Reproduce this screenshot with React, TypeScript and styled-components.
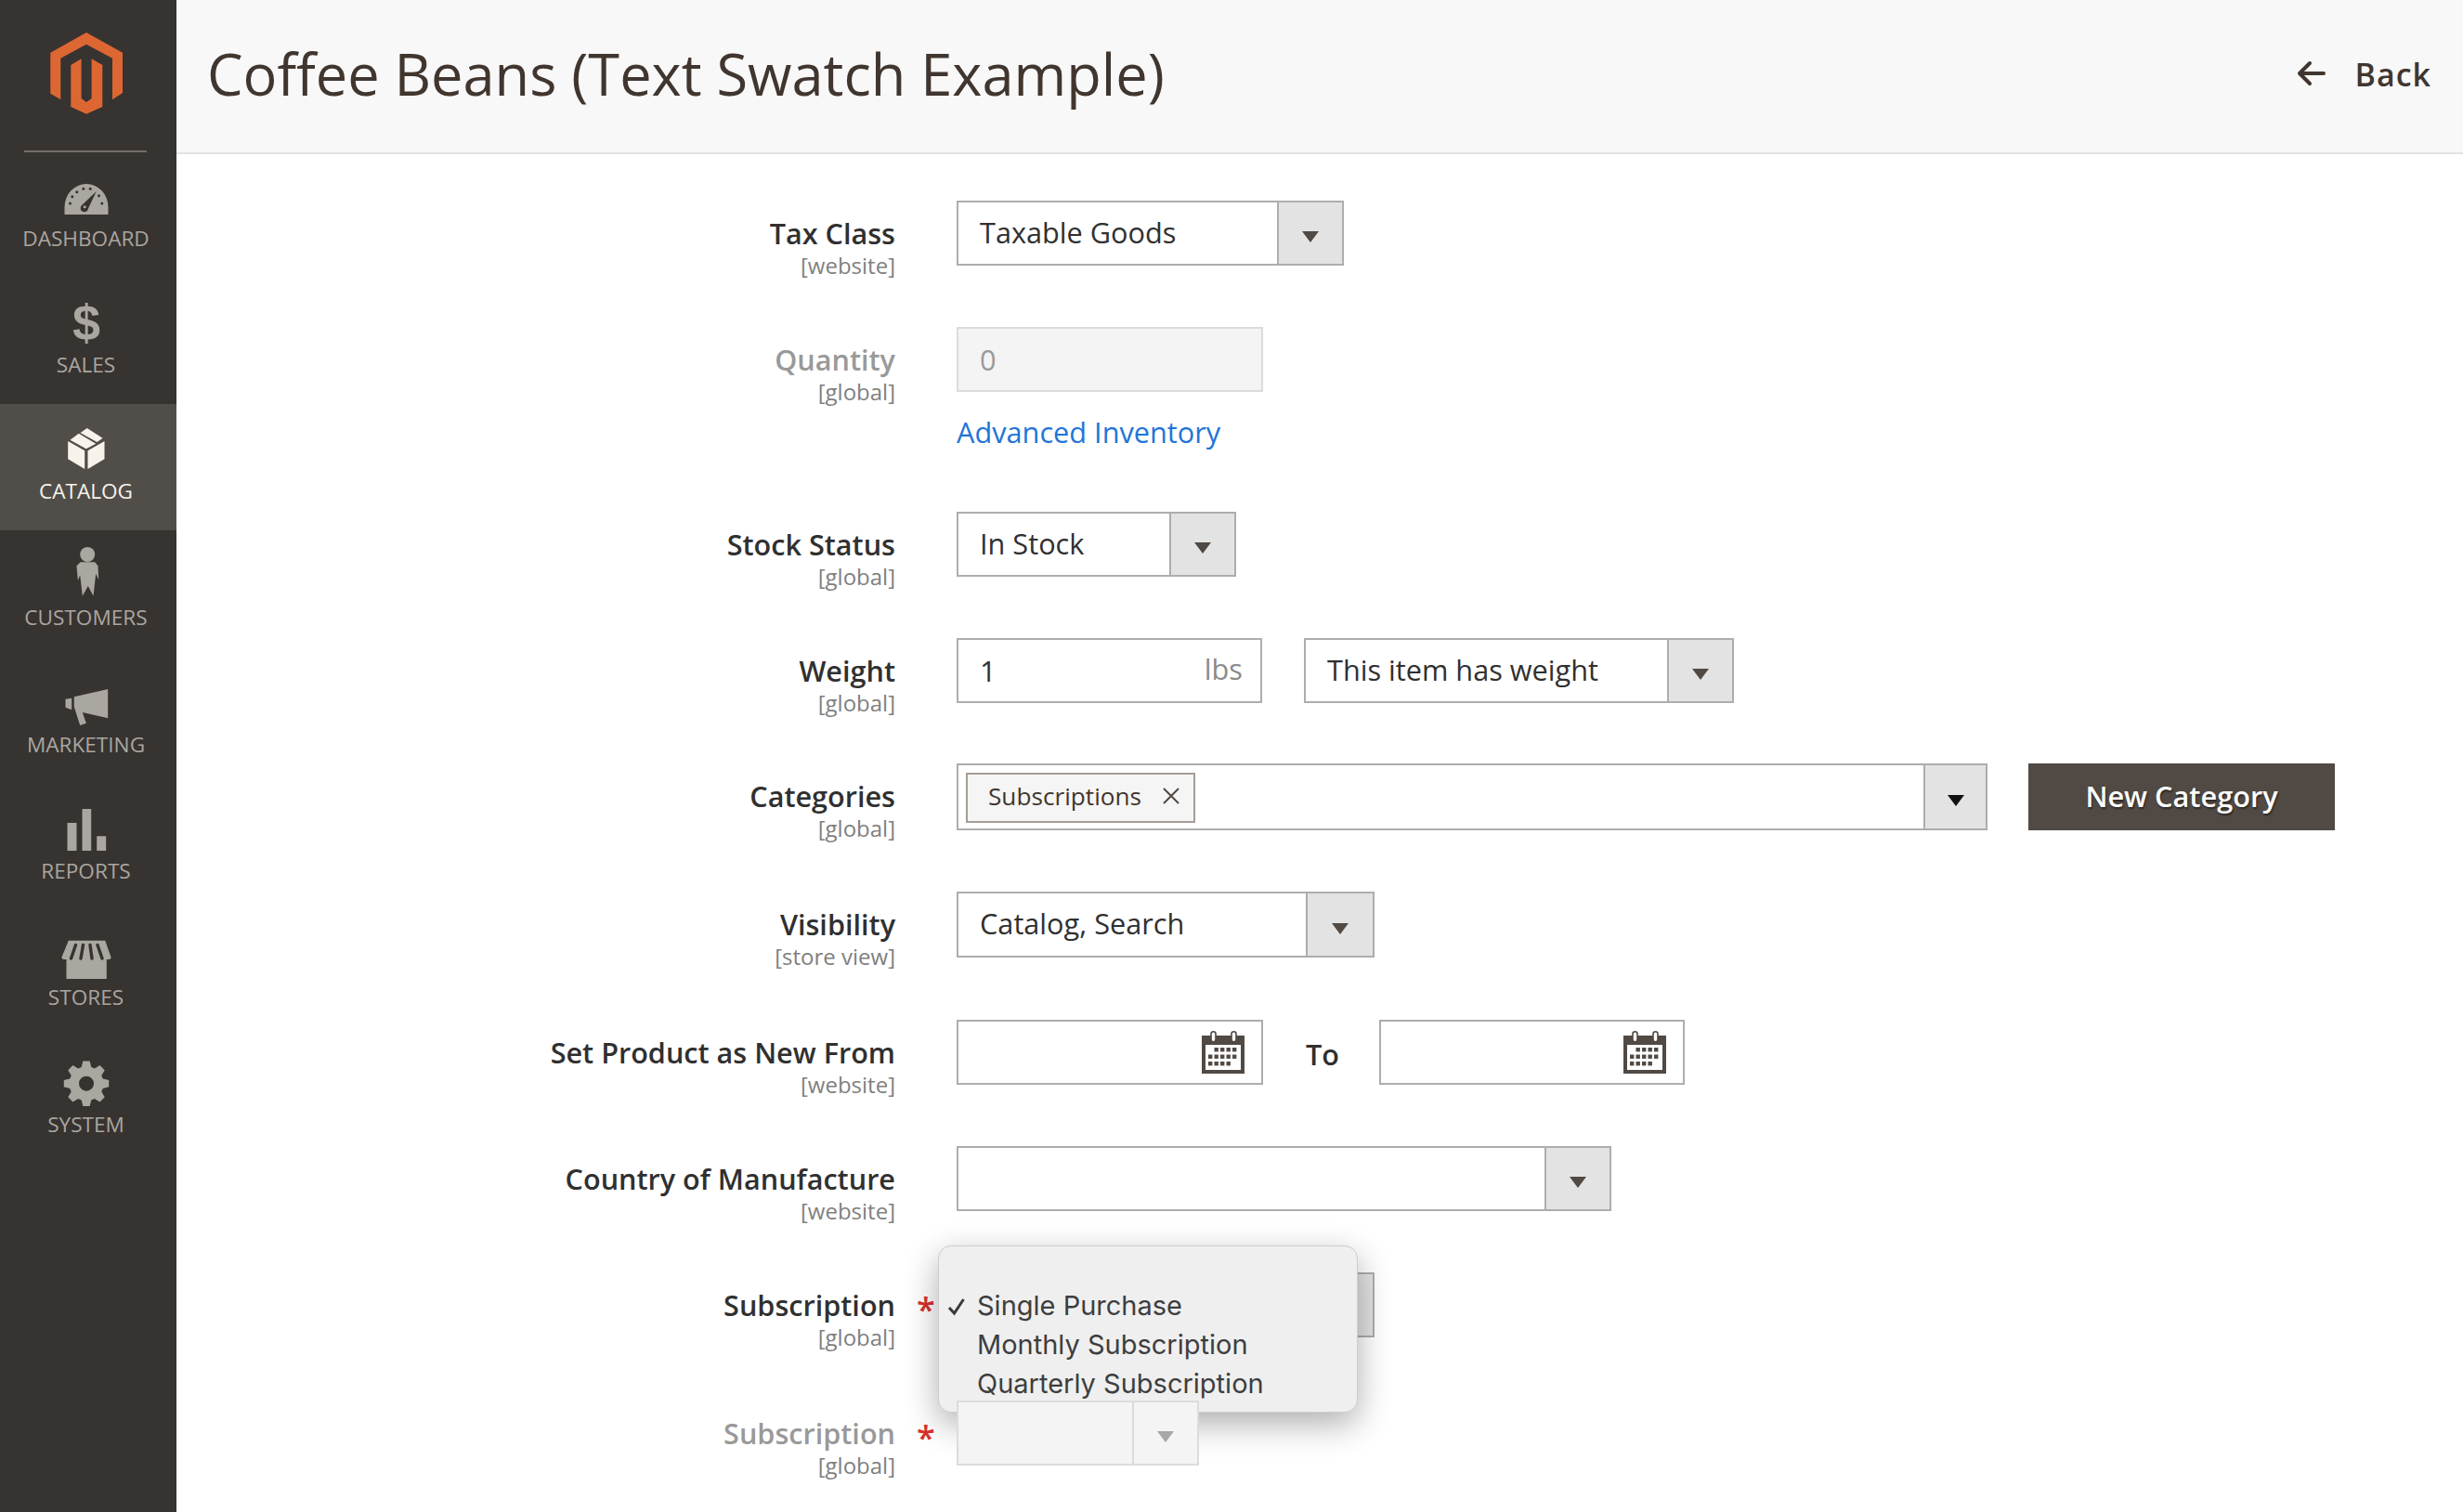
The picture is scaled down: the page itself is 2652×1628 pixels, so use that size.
import React from "react";
import styled, { createGlobalStyle } from "styled-components";

const Global = createGlobalStyle`
  html, body { margin: 0; padding: 0; background: #fff; }
  body { font-family: "Open Sans", "Noto Sans", sans-serif; color: #303030; }
  * { box-sizing: border-box; }
`;

const Page = styled.div`
  display: flex;
  width: 2652px;
  height: 1628px;
  overflow: hidden;
`;

const Sidebar = styled.aside`
  flex: 0 0 190px;
  background: #373330;
`;

const LogoBlock = styled.div`
  height: 164px;
  margin: 0 32px -2px 26px;
  padding: 34px 0 0 1px;
  border-bottom: 2px solid #736e69;
  display: flex;
  justify-content: center;
  align-items: flex-start;
`;

const NavItem = styled.div<{ $active?: boolean }>`
  height: 136.3px;
  padding: 22px 5px 0 0;
  display: flex;
  flex-direction: column;
  align-items: center;
  background: ${(p) => (p.$active ? "#514e49" : "transparent")};
  color: ${(p) => (p.$active ? "#f7f3eb" : "#aaa6a0")};
`;

const NavIcon = styled.svg`
  width: 56px;
  height: 56px;
  flex: none;
  display: block;
  fill: currentColor;
  overflow: visible;
`;

const NavLabel = styled.div`
  font-size: 22.6px;
  line-height: 30px;
  margin-top: 1.5px;
  white-space: nowrap;
`;

const Main = styled.main`
  flex: 1;
  min-width: 0;
`;

const Header = styled.header`
  height: 166px;
  background: #f8f8f8;
  border-bottom: 2px solid #e3e3e3;
  display: flex;
  align-items: center;
  justify-content: space-between;
  padding: 0 34px 4px 33px;
`;

const Title = styled.h1`
  margin: 0 0 3px;
  font-size: 61.3px;
  line-height: 80px;
  font-weight: 400;
  color: #41362f;
  white-space: nowrap;
`;

const Back = styled.div`
  display: flex;
  align-items: center;
  gap: 32px;
  font-size: 34px;
  line-height: 44px;
  font-weight: 600;
  letter-spacing: 1px;
  color: #41362f;
`;

const BackIcon = styled.svg`
  width: 31px;
  height: 28px;
  margin-top: -2px;
  fill: none;
  stroke: currentColor;
  stroke-width: 4;
  stroke-linecap: round;
  stroke-linejoin: round;
`;

const Form = styled.section`
  padding-top: 50px;
`;

const Row = styled.div<{ $pitch: number }>`
  display: grid;
  grid-template-columns: 774px 66px 1fr;
  height: ${(p) => p.$pitch}px;
`;

const LabelCell = styled.div<{ $muted?: boolean }>`
  text-align: right;
  color: ${(p) => (p.$muted ? "#999999" : "#303030")};
  padding-top: 17px;
`;

const LabelText = styled.div`
  font-size: 30.6px;
  line-height: 36px;
  font-weight: 600;
`;

const Scope = styled.div`
  font-size: 24px;
  line-height: 34px;
  color: #808080;
`;

const StarCell = styled.div`
  padding: 16px 0 0 23px;
  font-size: 36px;
  line-height: 48px;
  font-weight: 600;
  color: #d8322c;
`;

const Fields = styled.div`
  display: flex;
  align-items: flex-start;
  position: relative;
`;

const Stack = styled.div`
  display: flex;
  flex-direction: column;
`;

const Select = styled.div<{ $width: number; $height?: number; $disabled?: boolean }>`
  width: ${(p) => p.$width}px;
  height: ${(p) => p.$height ?? 70}px;
  flex: none;
  display: flex;
  border: 2px solid ${(p) => (p.$disabled ? "#dcdcdc" : "#adadad")};
  background: ${(p) => (p.$disabled ? "#f4f4f4" : "#fff")};
`;

const SelectValue = styled.div`
  flex: 1;
  min-width: 0;
  padding-left: 23px;
  font-size: 30.7px;
  line-height: 65px;
  white-space: nowrap;
  color: #303030;
`;

const SelectButton = styled.div<{ $disabled?: boolean; $wide?: number; $dark?: boolean }>`
  flex: 0 0 ${(p) => p.$wide ?? 70}px;
  border-left: 2px solid ${(p) => (p.$disabled ? "#dcdcdc" : "#adadad")};
  background: ${(p) => (p.$disabled ? "#f4f4f4" : "#e3e3e3")};
  display: flex;
  align-items: center;
  justify-content: center;
  padding-top: 8px;

  &::after {
    content: "";
    border-left: 9px solid transparent;
    border-right: 9px solid transparent;
    border-top: 12px solid ${(p) => (p.$disabled ? "#a7a7a7" : p.$dark ? "#111" : "#514943")};
  }
`;

const TextBox = styled.div<{ $width: number; $disabled?: boolean }>`
  width: ${(p) => p.$width}px;
  height: 70px;
  flex: none;
  display: flex;
  align-items: center;
  justify-content: space-between;
  padding: 0 19px 0 23px;
  font-size: 30.7px;
  border: 2px solid ${(p) => (p.$disabled ? "#dcdcdc" : "#adadad")};
  background: ${(p) => (p.$disabled ? "#f4f4f4" : "#fff")};
  color: ${(p) => (p.$disabled ? "#9a9a9a" : "#303030")};
`;

const Unit = styled.span`
  color: #8a8a8a;
  position: relative;
  top: -2px;
`;

const AdvancedLink = styled.a`
  margin-top: 23px;
  font-size: 30.7px;
  line-height: 40px;
  color: #1f75d8;
  white-space: nowrap;
`;

const Tag = styled.div`
  height: 54px;
  margin: 8px 0 0 8px;
  display: flex;
  align-items: center;
  gap: 22px;
  padding: 0 14px 5px 22px;
  font-size: 26.2px;
  background: #f5f5f5;
  border: 2px solid #a79d95;
  color: #41362f;
  white-space: nowrap;
`;

const TagClose = styled.svg`
  width: 20px;
  height: 20px;
  fill: none;
  stroke: #514943;
  stroke-width: 2;
`;

const Spacer = styled.div`
  flex: 1;
`;

const PrimaryButton = styled.div`
  flex: none;
  width: 330px;
  height: 72px;
  margin-left: 44px;
  background: #514943;
  color: #fff;
  font-size: 30.7px;
  font-weight: 600;
  line-height: 70px;
  text-align: center;
  text-shadow: 1px 2px 2px rgba(0, 0, 0, 0.45);
`;

const Between = styled.div`
  flex: none;
  width: 125px;
  padding: 17px 0 0 46px;
  font-size: 30.6px;
  line-height: 40px;
  font-weight: 600;
  color: #303030;
`;

const Gutter = styled.div`
  flex: none;
  width: 45px;
`;

const CalendarIcon = styled.svg`
  width: 46px;
  height: 46px;
  flex: none;
  margin-right: -1px;
`;

const Menu = styled.div`
  position: absolute;
  left: -20px;
  top: -29px;
  width: 452px;
  height: 180px;
  padding: 1px 0 8px;
  background: #efefef;
  border: 1px solid #cdcdcd;
  border-radius: 14px;
  box-shadow: 0 12px 36px rgba(0, 0, 0, 0.32);
  font-family: Inter, "Liberation Sans", sans-serif;
  font-size: 29px;
  color: #3e3e3e;
`;

const MenuOption = styled.div`
  height: 42px;
  line-height: 42px;
  padding-left: 41px;
  position: relative;
  white-space: nowrap;
`;

const Check = styled.svg`
  position: absolute;
  left: 9px;
  top: 12px;
  width: 20px;
  height: 20px;
  fill: none;
  stroke: #3a3a3a;
  stroke-width: 3;
`;

const gearPath = (() => {
  const cx = 28, cy = 28.7, teeth = 8, rOut = 24.5, rIn = 18.5;
  const pts: string[] = [];
  for (let i = 0; i < teeth; i++) {
    const a = (i * 2 * Math.PI) / teeth - Math.PI / 2;
    [[-0.29, rIn], [-0.15, rOut], [0.15, rOut], [0.29, rIn]].forEach(([d, r]) => {
      pts.push(`${(cx + r * Math.cos(a + d)).toFixed(2)} ${(cy + r * Math.sin(a + d)).toFixed(2)}`);
    });
  }
  return `M${pts.join("L")}Z M${cx - 8} ${cy} a8 8 0 1 0 16 0 a8 8 0 1 0 -16 0Z`;
})();

const BG = "#373330";

const icons: Record<string, React.ReactNode> = {
  DASHBOARD: (
    <>
      <path d="M4.5 47V39A23.5 25 0 0 1 51.5 39V47Z" />
      <g fill={BG}>
        <circle cx="10.5" cy="35" r="1.5" />
        <circle cx="12.8" cy="27.7" r="1.5" />
        <circle cx="17.8" cy="22.7" r="1.5" />
        <circle cx="24.8" cy="19.3" r="1.5" />
        <circle cx="32.2" cy="19.3" r="1.5" />
        <circle cx="41.5" cy="26.7" r="1.5" />
        <circle cx="44.8" cy="35" r="1.5" />
        <path d="M38.8 22L30 40.5a4.2 4.2 0 1 1-7-3.5Z" />
      </g>
      <circle cx="26.2" cy="38.7" r="1.5" />
    </>
  ),
  SALES: (
    <text x="28" y="46" textAnchor="middle" fontFamily='"Liberation Sans", sans-serif' fontWeight="700" fontSize="54">
      $
    </text>
  ),
  CATALOG: (
    <>
      <path d="M8.2 18L26.2 28.3V48L8.2 37.3Z" />
      <path d="M29.5 28.3L47.5 18V37.3L29.5 48Z" />
      <path d="M10.5 16.7L19.8 9.7L38.2 20.7L27.8 26.3Z" />
      <path d="M21.5 9L28.8 4L45.5 14.7L39.5 19Z" />
    </>
  ),
  CUSTOMERS: (
    <>
      <circle cx="29.2" cy="4" r="8" />
      <path d="M21.5 12.3H37.2L40.5 16.3L41.2 31.3L38.2 24.7L35.5 48.7L29.8 38L23.8 48.7L21.2 26.3L18.8 32L17.5 16.3Z" />
    </>
  ),
  MARKETING: (
    <>
      <path d="M5.5 23.7L12.2 22.7V35.3L5.5 32.7Z" />
      <path d="M14.8 21.3L51.2 13V44.3L23.8 38L27.8 49.7L21.2 52L14.8 32Z" />
    </>
  ),
  REPORTS: (
    <>
      <rect x="7.5" y="21" width="10" height="30" />
      <rect x="23.5" y="6" width="9.7" height="45" />
      <rect x="39.2" y="35.3" width="10" height="15.7" />
    </>
  ),
  STORES: (
    <>
      <rect x="6.5" y="31" width="43.3" height="21" />
      <path d="M8.8 10.7H48.2L54.5 28.5Q54.5 31 52 31H4Q1.5 31 1.5 28.5Z" />
      <g stroke={BG} strokeWidth="3.4" strokeLinecap="round" fill="none">
        <path d="M16.5 15.5L11.5 30" />
        <path d="M24.5 15.5L22 30" />
        <path d="M32 15.5L34 30" />
        <path d="M40 15.5L45 30" />
      </g>
    </>
  ),
  SYSTEM: <path fillRule="evenodd" d={gearPath} />,
};

const navItems = ["DASHBOARD", "SALES", "CATALOG", "CUSTOMERS", "MARKETING", "REPORTS", "STORES", "SYSTEM"];

const Logo = () => (
  <svg width="80" height="90" viewBox="0 0 80 90" fill="#dd6733">
    <path d="M40 1L79 22.7V66L68 73.3V28.7L40 13.7L12.3 28.7V73.3L1.3 66.7V22.7Z" />
    <path d="M34.6 29.3V72L40 76L45.6 72V29.3L57.3 36V81L40 88.7L23.3 81V36Z" />
  </svg>
);

const Calendar = () => (
  <CalendarIcon viewBox="0 0 46 46">
    <rect x="0" y="5" width="46" height="41" fill="#514943" />
    <rect x="4" y="15" width="38" height="27" fill="#fff" />
    <g fill="none" stroke="#514943" strokeWidth="1.6">
      <rect x="10" y="0.8" width="5" height="11" rx="2.5" fill="#fff" />
      <rect x="32" y="0.8" width="5" height="11" rx="2.5" fill="#fff" />
    </g>
    <g fill="#514943">
      {[1, 2, 3, 4].map((c) => <rect key={`a${c}`} x={7 + c * 6.5} y="18" width="4.4" height="4.4" />)}
      {[0, 1, 2, 3, 4].map((c) => <rect key={`b${c}`} x={7 + c * 6.5} y="25.5" width="4.4" height="4.4" />)}
      {[0, 1, 2, 3].map((c) => <rect key={`c${c}`} x={7 + c * 6.5} y="33" width="4.4" height="4.4" />)}
    </g>
  </CalendarIcon>
);

const Label = ({ text, scope, muted }: { text: string; scope: string; muted?: boolean }) => (
  <LabelCell $muted={muted}>
    <LabelText>{text}</LabelText>
    <Scope>{scope}</Scope>
  </LabelCell>
);

const SelectBox = ({ width, value, btn, disabled, height }: { width: number; value?: string; btn?: number; disabled?: boolean; height?: number }) => (
  <Select $width={width} $disabled={disabled} $height={height}>
    <SelectValue>{value}</SelectValue>
    <SelectButton $wide={btn} $disabled={disabled} />
  </Select>
);

export default function App() {
  return (
    <Page>
      <Global />
      <Sidebar>
        <LogoBlock>
          <Logo />
        </LogoBlock>
        {navItems.map((n) => (
          <NavItem key={n} $active={n === "CATALOG"}>
            <NavIcon viewBox="0 0 56 56">{icons[n]}</NavIcon>
            <NavLabel>{n}</NavLabel>
          </NavItem>
        ))}
      </Sidebar>
      <Main>
        <Header>
          <Title>Coffee Beans (Text Swatch Example)</Title>
          <Back>
            <BackIcon viewBox="0 0 31 28">
              <path d="M29 14H3M14 3L3 14L14 25" />
            </BackIcon>
            Back
          </Back>
        </Header>
        <Form>
          <Row $pitch={136}>
            <Label text="Tax Class" scope="[website]" />
            <div />
            <Fields>
              <SelectBox width={417} value="Taxable Goods" />
            </Fields>
          </Row>
          <Row $pitch={199}>
            <Label text="Quantity" scope="[global]" muted />
            <div />
            <Fields>
              <Stack>
                <TextBox $width={330} $disabled>0</TextBox>
                <AdvancedLink>Advanced Inventory</AdvancedLink>
              </Stack>
            </Fields>
          </Row>
          <Row $pitch={136}>
            <Label text="Stock Status" scope="[global]" />
            <div />
            <Fields>
              <SelectBox width={301} value="In Stock" />
            </Fields>
          </Row>
          <Row $pitch={135}>
            <Label text="Weight" scope="[global]" />
            <div />
            <Fields>
              <TextBox $width={329}>
                1<Unit>lbs</Unit>
              </TextBox>
              <Gutter />
              <SelectBox width={463} value="This item has weight" />
            </Fields>
          </Row>
          <Row $pitch={138}>
            <Label text="Categories" scope="[global]" />
            <div />
            <Fields>
              <Select $width={1110} $height={72}>
                <Tag>
                  Subscriptions
                  <TagClose viewBox="0 0 20 20">
                    <path d="M2 2L18 18M18 2L2 18" />
                  </TagClose>
                </Tag>
                <Spacer />
                <SelectButton $wide={67} $dark />
              </Select>
              <PrimaryButton>New Category</PrimaryButton>
            </Fields>
          </Row>
          <Row $pitch={138}>
            <Label text="Visibility" scope="[store view]" />
            <div />
            <Fields>
              <SelectBox width={450} value="Catalog, Search" btn={72} height={71} />
            </Fields>
          </Row>
          <Row $pitch={136}>
            <Label text="Set Product as New From" scope="[website]" />
            <div />
            <Fields>
              <TextBox $width={330}>
                <span />
                <Calendar />
              </TextBox>
              <Between>To</Between>
              <TextBox $width={329}>
                <span />
                <Calendar />
              </TextBox>
            </Fields>
          </Row>
          <Row $pitch={136}>
            <Label text="Country of Manufacture" scope="[website]" />
            <div />
            <Fields>
              <SelectBox width={705} />
            </Fields>
          </Row>
          <Row $pitch={138}>
            <Label text="Subscription" scope="[global]" />
            <StarCell>*</StarCell>
            <Fields>
              <SelectBox width={450} />
              <Menu>
                <MenuOption />
                <MenuOption>
                  <Check viewBox="0 0 20 20">
                    <path d="M2 11L7.5 17L17.5 2" />
                  </Check>
                  Single Purchase
                </MenuOption>
                <MenuOption>Monthly Subscription</MenuOption>
                <MenuOption>Quarterly Subscription</MenuOption>
              </Menu>
            </Fields>
          </Row>
          <Row $pitch={120}>
            <Label text="Subscription" scope="[global]" muted />
            <StarCell>*</StarCell>
            <Fields>
              <SelectBox width={261} disabled />
            </Fields>
          </Row>
        </Form>
      </Main>
    </Page>
  );
}
